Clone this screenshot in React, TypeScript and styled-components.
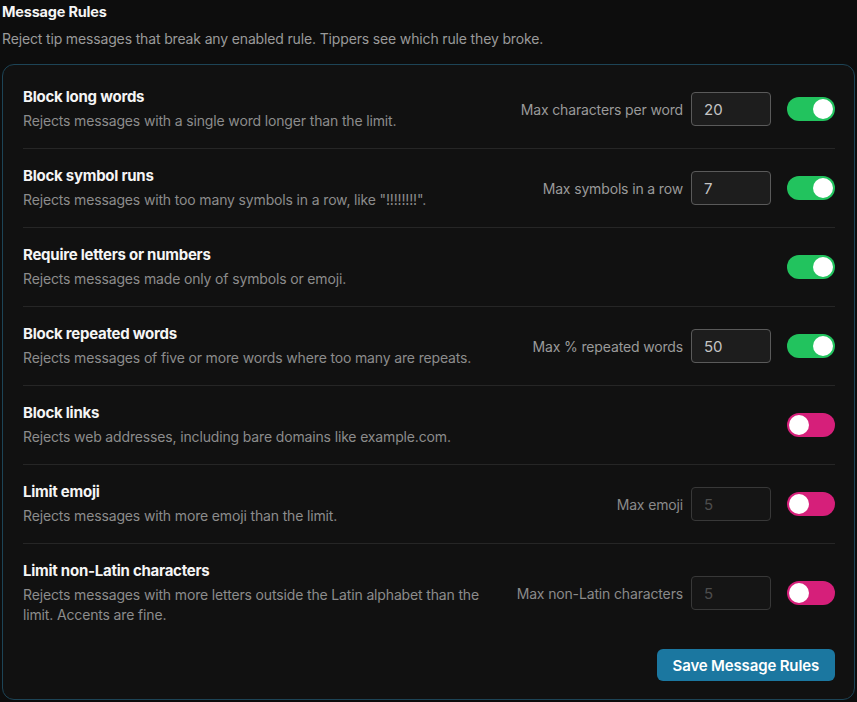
import React, { useState } from 'react'
import styled, { createGlobalStyle } from 'styled-components'

const GlobalStyle = createGlobalStyle`
    * {
        box-sizing: border-box;
    }

    body {
        margin: 0;
        background: #0d0d0d;
        color: #f2f2f2;
        font-family: Inter, 'Noto Sans', sans-serif;
    }
`

interface Rule {
    id: string
    title: string
    description: string
    limitLabel?: string
    limit?: number
    enabled: boolean
}

const initialRules: Rule[] = [
    {
        id: 'long-words',
        title: 'Block long words',
        description: 'Rejects messages with a single word longer than the limit.',
        limitLabel: 'Max characters per word',
        limit: 20,
        enabled: true,
    },
    {
        id: 'symbol-runs',
        title: 'Block symbol runs',
        description: 'Rejects messages with too many symbols in a row, like "!!!!!!!!".',
        limitLabel: 'Max symbols in a row',
        limit: 7,
        enabled: true,
    },
    {
        id: 'letters',
        title: 'Require letters or numbers',
        description: 'Rejects messages made only of symbols or emoji.',
        enabled: true,
    },
    {
        id: 'repeated',
        title: 'Block repeated words',
        description: 'Rejects messages of five or more words where too many are repeats.',
        limitLabel: 'Max % repeated words',
        limit: 50,
        enabled: true,
    },
    {
        id: 'links',
        title: 'Block links',
        description: 'Rejects web addresses, including bare domains like example.com.',
        enabled: false,
    },
    {
        id: 'emoji',
        title: 'Limit emoji',
        description: 'Rejects messages with more emoji than the limit.',
        limitLabel: 'Max emoji',
        limit: 5,
        enabled: false,
    },
    {
        id: 'non-latin',
        title: 'Limit non-Latin characters',
        description: 'Rejects messages with more letters outside the Latin alphabet than the limit. Accents are fine.',
        limitLabel: 'Max non-Latin characters',
        limit: 5,
        enabled: false,
    },
]

const Page = styled.div`
    padding: 0 2px 2px;
`

const Heading = styled.h2`
    margin: 0;
    font-size: 14.5px;
    font-weight: 700;
    line-height: 24px;
    letter-spacing: -0.2px;
    color: #f5f5f5;
`

const Subheading = styled.p`
    margin: 5px 0 15px;
    font-size: 14px;
    line-height: 20px;
    color: #9a9a9a;
    letter-spacing: -0.15px;
`

const Card = styled.section`
    background: #111111;
    border: 1px solid #1d4456;
    border-radius: 12px;
    padding: 5px 19px 18px 20px;
`

const RuleRow = styled.div`
    display: flex;
    align-items: center;
    gap: 24px;
    padding: 17px 0;

    & + & {
        border-top: 1px solid #262626;
    }
`

const RuleText = styled.div`
    flex: 1;
    min-width: 0;
    max-width: 475px;
`

const RuleTitle = styled.div`
    font-size: 15px;
    font-weight: 700;
    line-height: 20px;
    letter-spacing: -0.25px;
    color: #f5f5f5;
`

const RuleDescription = styled.div`
    margin-top: 4px;
    font-size: 14px;
    line-height: 20px;
    letter-spacing: -0.15px;
    color: #8c8c8c;
`

const Controls = styled.div`
    margin-left: auto;
    display: flex;
    align-items: center;
    gap: 16px;
`

const LimitField = styled.label<{ $disabled: boolean }>`
    display: flex;
    align-items: center;
    gap: 8px;
    font-size: 14px;
    letter-spacing: -0.15px;
    white-space: nowrap;
    color: ${({ $disabled }) => ($disabled ? '#8a8a8a' : '#9a9a9a')};
`

const LimitInput = styled.input`
    width: 80px;
    height: 34px;
    padding: 0 12px;
    border-radius: 4px;
    border: 1px solid #5a5a5a;
    background: #1d1d1d;
    color: #c4c4c4;
    font-family: inherit;
    font-size: 15px;
    outline: none;

    &:disabled {
        border-color: #383838;
        background: #151515;
        color: #4d4d4d;
    }
`

const Switch = styled.button<{ $on: boolean }>`
    position: relative;
    flex: none;
    width: 48px;
    height: 24px;
    padding: 0;
    border: none;
    border-radius: 12px;
    background: ${({ $on }) => ($on ? '#22c35e' : '#d61f7a')};
    cursor: pointer;

    &::after {
        content: '';
        position: absolute;
        top: 2px;
        left: ${({ $on }) => ($on ? '26px' : '2px')};
        width: 20px;
        height: 20px;
        border-radius: 50%;
        background: #ffffff;
    }
`

const Footer = styled.div`
    display: flex;
    justify-content: flex-end;
    margin-top: 7px;
`

const SaveButton = styled.button`
    height: 32px;
    padding: 0 16px;
    border: none;
    border-radius: 6px;
    background: #1b77a0;
    color: #ffffff;
    font-family: inherit;
    font-size: 15px;
    font-weight: 600;
    letter-spacing: -0.15px;
    cursor: pointer;
`

const App = () => {
    const [rules, setRules] = useState(initialRules)

    const toggle = (id: string) =>
        setRules((prev) => prev.map((rule) => (rule.id === id ? { ...rule, enabled: !rule.enabled } : rule)))

    const changeLimit = (id: string, value: string) =>
        setRules((prev) => prev.map((rule) => (rule.id === id ? { ...rule, limit: Number(value) } : rule)))

    return (
        <Page>
            <GlobalStyle />
            <Heading>Message Rules</Heading>
            <Subheading>Reject tip messages that break any enabled rule. Tippers see which rule they broke.</Subheading>
            <Card>
                {rules.map((rule) => (
                    <RuleRow key={rule.id}>
                        <RuleText>
                            <RuleTitle>{rule.title}</RuleTitle>
                            <RuleDescription>{rule.description}</RuleDescription>
                        </RuleText>
                        <Controls>
                            {rule.limitLabel && (
                                <LimitField $disabled={!rule.enabled}>
                                    {rule.limitLabel}
                                    <LimitInput
                                        type="text"
                                        value={rule.limit}
                                        disabled={!rule.enabled}
                                        onChange={(e) => changeLimit(rule.id, e.target.value)}
                                    />
                                </LimitField>
                            )}
                            <Switch $on={rule.enabled} onClick={() => toggle(rule.id)} aria-label={rule.title} />
                        </Controls>
                    </RuleRow>
                ))}
                <Footer>
                    <SaveButton>Save Message Rules</SaveButton>
                </Footer>
            </Card>
        </Page>
    )
}

export default App
